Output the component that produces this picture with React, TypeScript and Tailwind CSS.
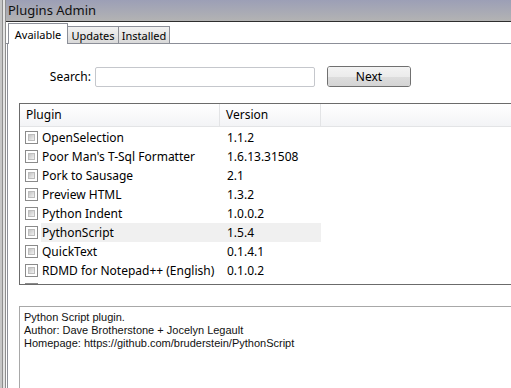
import React from "react";

const rows: [string, string][] = [
  ["OpenSelection", "1.1.2"],
  ["Poor Man's T-Sql Formatter", "1.6.13.31508"],
  ["Pork to Sausage", "2.1"],
  ["Preview HTML", "1.3.2"],
  ["Python Indent", "1.0.0.2"],
  ["PythonScript", "1.5.4"],
  ["QuickText", "0.1.4.1"],
  ["RDMD for Notepad++ (English)", "0.1.0.2"],
  ["", ""],
];

function Check() {
  return (
    <div className="w-[13px] h-[13px] border border-[#8a8a8a] bg-white p-[2px] shrink-0">
      <div className="w-full h-full bg-gradient-to-br from-[#c4c4c4] to-[#f2f2f2] border border-[#bdbdbd]" />
    </div>
  );
}

export default function App() {
  const ui = { fontFamily: '"Noto Sans", "Open Sans", sans-serif' };
  const tahoma = { fontFamily: '"Liberation Sans", Arial, sans-serif' };
  return (
    <div className="w-[511px] h-[388px] overflow-hidden flex bg-white text-[#000]" style={ui}>
      <div className="flex h-full shrink-0">
        <div className="w-[2px] bg-[#c6c6c6]" />
        <div className="w-[1px] bg-[#8e8e8e]" />
        <div className="w-[2px] bg-[#e4e4e4]" />
        <div className="w-[1px] bg-[#8e8e8e]" />
      </div>
      <div className="flex-1 flex flex-col min-w-0">
        <div className="h-[21px] shrink-0 bg-gradient-to-b from-[#9c9fb6] to-[#b3b3b3] flex items-center pl-[2px] text-[13px] text-[#111] leading-none">
          Plugins Admin
        </div>
        <div className="flex-1 flex flex-col border-t border-[#2e2e2e] bg-white">
          <div className="h-[22px] shrink-0 flex items-end pl-[2px] relative">
            <div className="absolute left-0 right-0 bottom-0 h-px bg-[#8c8f98]" />
            <div className="relative z-10 h-[21px] w-[60px] bg-white border border-b-0 border-[#8c8f98] flex items-center justify-center text-[11px] leading-none">
              Available
            </div>
            <div className="relative h-[18px] w-[51px] bg-gradient-to-b from-[#f2f2f2] to-[#d9d9d9] border border-l-0 border-[#8c8f98] flex items-center justify-center text-[11px] leading-none">
              Updates
            </div>
            <div className="relative h-[18px] w-[51px] bg-gradient-to-b from-[#f2f2f2] to-[#d9d9d9] border border-l-0 border-[#8c8f98] flex items-center justify-center text-[11px] leading-none">
              Installed
            </div>
          </div>
          <div className="flex-1 flex flex-col border-l border-[#8c8f98] ml-[1px]">
            <div className="flex items-center mt-[22px] h-[21px]">
              <div className="w-[87px] text-right text-[12px] pr-[4px]">Search:</div>
              <div className="w-[220px] h-[20px] border border-[#c5c7cc] rounded-[2px] bg-white" />
              <div className="ml-[12px] w-[84px] h-[21px] border border-[#707070] rounded-[3px] flex flex-col overflow-hidden relative">
                <div className="h-1/2 bg-gradient-to-b from-[#f3f3f3] to-[#ebebeb]" />
                <div className="h-1/2 bg-gradient-to-b from-[#dddddd] to-[#d4d4d4]" />
                <div className="absolute inset-0 flex items-center justify-center text-[12px]">Next</div>
              </div>
            </div>
            <div className="ml-[11px] mt-[16px] h-[182px] border border-r-0 border-[#6b6b6b] overflow-hidden">
              <div className="h-[23px] flex bg-gradient-to-b from-white to-[#f3f4f6] border-b border-[#e3e4e6] text-[12px]">
                <div className="w-[200px] pl-[6px] flex items-center border-r border-[#e3e4e6]">Plugin</div>
                <div className="w-[101px] pl-[6px] flex items-center border-r border-[#e3e4e6]">Version</div>
              </div>
              <div className="pt-[1px]">
                {rows.map(([n, v], i) => (
                  <div key={i} className="h-[19px] flex items-center text-[12px]">
                    <div className="w-[21px] pl-[5px] flex items-center">
                      <Check />
                    </div>
                    <div className={`flex h-full items-center ${i === 5 ? "bg-[#f0f0f0]" : ""}`}>
                      <div className="w-[180px] pl-[1px] whitespace-nowrap">{n}</div>
                      <div className="w-[100px] pl-[6px] whitespace-nowrap">{v}</div>
                    </div>
                  </div>
                ))}
              </div>
            </div>
            <div className="ml-[11px] mt-[21px] flex-1 border-t border-l border-[#a8a8a8] pl-[4px] pt-[4px] text-[11px] leading-[13px] text-[#111]" style={tahoma}>
              <div>Python Script plugin.</div>
              <div>Author: Dave Brotherstone + Jocelyn Legault</div>
              <div>Homepage: https://github.com/bruderstein/PythonScript</div>
            </div>
          </div>
        </div>
      </div>
    </div>
  );
}
